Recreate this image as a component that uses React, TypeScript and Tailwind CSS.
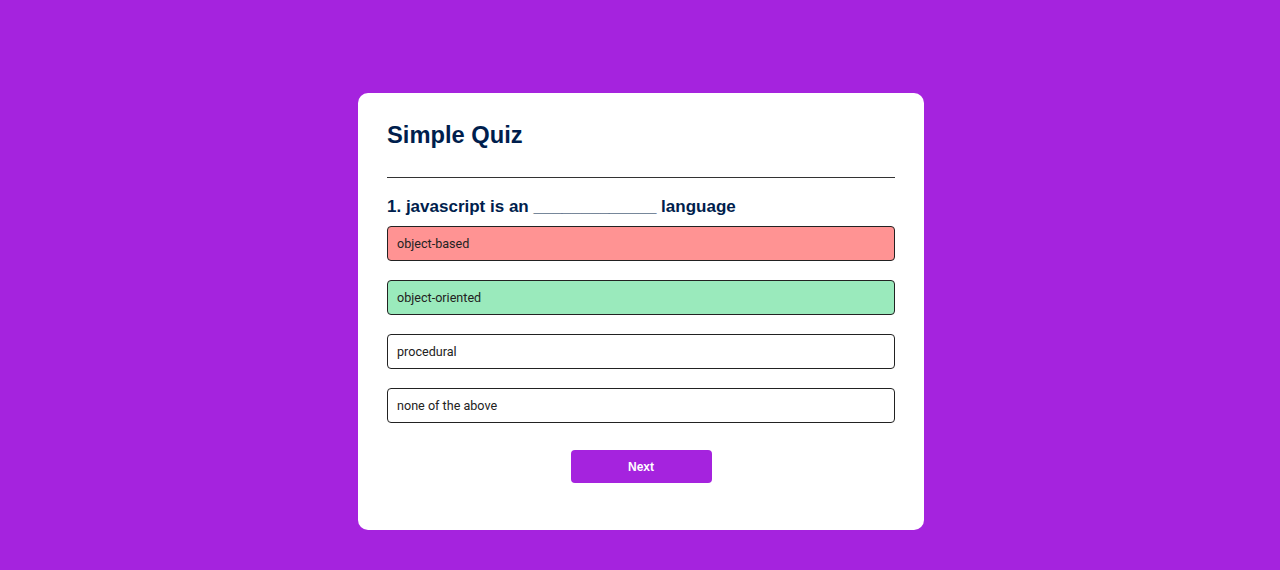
const answers = [
  { text: "object-based", state: "wrong" },
  { text: "object-oriented", state: "right" },
  { text: "procedural", state: "none" },
  { text: "none of the above", state: "none" },
];

export default function App() {
  return (
    <div className="min-h-[570px] w-full bg-[#a523de] pt-[93px] pl-[2px] font-['Liberation_Sans',Arial,sans-serif]">
      <div className="mx-auto w-[566px] rounded-[10px] bg-white px-[29px] pt-[28px] pb-[47px]">
        <h1 className="border-b border-[#333] pb-[28px] text-[23.7px] leading-[28px] font-bold text-[#001e4d]">
          Simple Quiz
        </h1>
        <div className="pt-[16px]">
          <h2 className="text-[17px] leading-[25px] font-bold text-[#001e4d]">
            1. javascript is an _____________ language
          </h2>
          <div className="mt-[7px] flex flex-col gap-[19px]">
            {answers.map((a) => (
              <button
                key={a.text}
                className={
                  "h-[35px] w-full rounded-[4px] border border-[#222] px-[9px] pt-[2px] text-left font-['Roboto',sans-serif] text-[12.6px] text-[#222] " +
                  (a.state === "wrong"
                    ? "bg-[#ff9393]"
                    : a.state === "right"
                      ? "bg-[#9aeabc]"
                      : "bg-white")
                }
              >
                {a.text}
              </button>
            ))}
          </div>
          <div className="mt-[27px] flex justify-center">
            <button className="h-[33px] w-[141px] rounded-[4px] bg-[#a523de] text-[12px] font-bold text-white">
              Next
            </button>
          </div>
        </div>
      </div>
    </div>
  );
}
